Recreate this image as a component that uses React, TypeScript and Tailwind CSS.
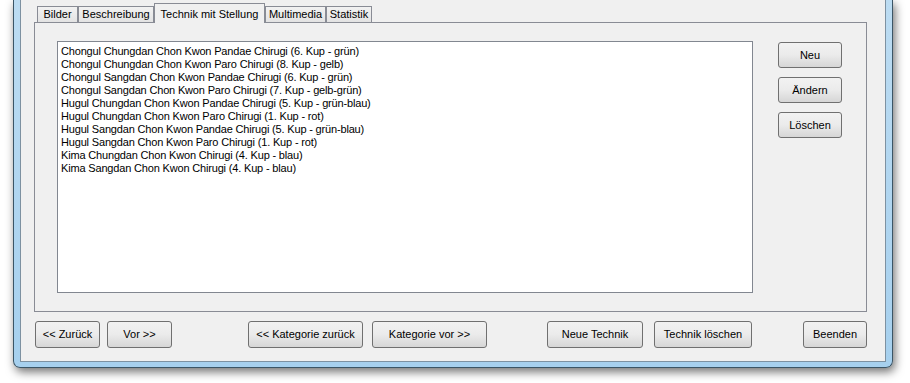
import React from 'react';

const items = [
  'Chongul Chungdan Chon Kwon Pandae Chirugi (6. Kup - grün)',
  'Chongul Chungdan Chon Kwon Paro Chirugi (8. Kup - gelb)',
  'Chongul Sangdan Chon Kwon Pandae Chirugi (6. Kup - grün)',
  'Chongul Sangdan Chon Kwon Paro Chirugi (7. Kup - gelb-grün)',
  'Hugul Chungdan Chon Kwon Pandae Chirugi (5. Kup - grün-blau)',
  'Hugul Chungdan Chon Kwon Paro Chirugi (1. Kup - rot)',
  'Hugul Sangdan Chon Kwon Pandae Chirugi (5. Kup - grün-blau)',
  'Hugul Sangdan Chon Kwon Paro Chirugi (1. Kup - rot)',
  'Kima Chungdan Chon Kwon Chirugi (4. Kup - blau)',
  'Kima Sangdan Chon Kwon Chirugi (4. Kup - blau)',
];

const tabs = [
  { label: 'Bilder', w: 'w-[41px]' },
  { label: 'Beschreibung', w: 'w-[76px]' },
  { label: 'Technik mit Stellung', w: 'w-[111px]', active: true },
  { label: 'Multimedia', w: 'w-[61px]' },
  { label: 'Statistik', w: 'w-[46px]' },
];

const WinButton = ({ children, className = '' }: { children: React.ReactNode; className?: string }) => (
  <button
    className={`flex items-center justify-center rounded-[3px] border border-[#707070] bg-gradient-to-b from-[#f2f2f2] via-[#ebebeb] to-[#d6d6d6] text-[11px] text-black ${className}`}
  >
    {children}
  </button>
);

const App = () => {
  return (
    <div className="w-[910px] h-[383px] bg-white pl-[13px] font-['Liberation_Sans',Arial,sans-serif] overflow-hidden">
      {/* window frame */}
      <div className="w-[880px] h-[368px] border-x border-b border-[#3b5566] rounded-b-[7px] bg-gradient-to-b from-[#bcdcf2] to-[#a6d0ee] px-[6px] pb-[5px] shadow-[2px_4px_10px_rgba(0,0,0,0.55)]">
        <div className="h-full border-x border-b border-[#7d91a1] bg-[#f0f0f0]">
          {/* tab control */}
          <div className="ml-[13px] w-[833px] pt-[3px]">
            <div className="flex items-end h-[19px] pl-[3px] relative z-10">
              {tabs.map((t) =>
                t.active ? (
                  <div
                    key={t.label}
                    className={`${t.w} h-[20px] -mb-[1px] border-x border-t border-[#898c95] bg-[#f0f0f0] flex items-start justify-center pt-[2px] text-[11px] text-black`}
                  >
                    {t.label}
                  </div>
                ) : (
                  <div
                    key={t.label}
                    className={`${t.w} h-[16px] border-x border-t border-[#898c95] bg-gradient-to-b from-[#f2f2f2] to-[#e3e3e3] flex items-center justify-center text-[11px] text-black`}
                  >
                    {t.label}
                  </div>
                )
              )}
            </div>
            <div className="h-[290px] border border-[#898c95] bg-[#f0f0f0] flex items-start">
              <div className="ml-[22px] mt-[18px] w-[696px] h-[252px] border border-[#828790] bg-white pl-[3px] pt-[3px]">
                {items.map((it) => (
                  <div key={it} className="text-[11px] leading-[13px] tracking-[-0.17px] text-black whitespace-nowrap">
                    {it}
                  </div>
                ))}
              </div>
              <div className="ml-[25px] mt-[19px] flex flex-col gap-[9px]">
                <WinButton className="w-[64px] h-[26px]">Neu</WinButton>
                <WinButton className="w-[64px] h-[26px]">Ändern</WinButton>
                <WinButton className="w-[64px] h-[26px]">Löschen</WinButton>
              </div>
            </div>
          </div>
          {/* bottom buttons */}
          <div className="flex mt-[9px]">
            <WinButton className="ml-[14px] w-[65px] h-[27px]">&lt;&lt; Zurück</WinButton>
            <WinButton className="ml-[7px] w-[65px] h-[27px]">Vor &gt;&gt;</WinButton>
            <WinButton className="ml-[76px] w-[115px] h-[27px]">&lt;&lt; Kategorie zurück</WinButton>
            <WinButton className="ml-[9px] w-[115px] h-[27px]">Kategorie vor &gt;&gt;</WinButton>
            <WinButton className="ml-[60px] w-[96px] h-[27px]">Neue Technik</WinButton>
            <WinButton className="ml-[11px] w-[98px] h-[27px]">Technik löschen</WinButton>
            <WinButton className="ml-[51px] w-[64px] h-[27px]">Beenden</WinButton>
          </div>
        </div>
      </div>
    </div>
  );
};

export default App;
